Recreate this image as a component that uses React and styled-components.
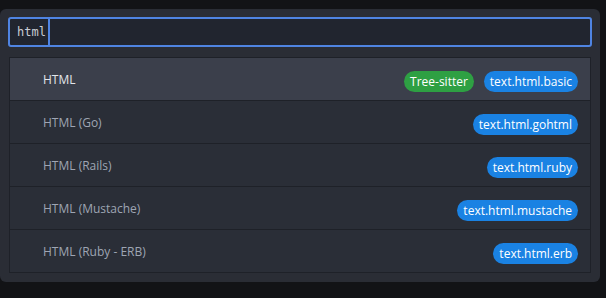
import React from 'react';
import styled, { createGlobalStyle } from 'styled-components';

const GlobalStyle = createGlobalStyle`
  html, body {
    margin: 0;
    padding: 0;
    background: #121316;
  }
`;

const grammars = [
  { name: 'HTML', badges: [{ label: 'Tree-sitter', kind: 'green' }, { label: 'text.html.basic' }] },
  { name: 'HTML (Go)', badges: [{ label: 'text.html.gohtml' }] },
  { name: 'HTML (Rails)', badges: [{ label: 'text.html.ruby' }] },
  { name: 'HTML (Mustache)', badges: [{ label: 'text.html.mustache' }] },
  { name: 'HTML (Ruby - ERB)', badges: [{ label: 'text.html.erb' }] },
];

const App = () => {
  return (
    <>
      <GlobalStyle />
      <Panel>
        <SearchBox>
          <Query>html</Query>
          <Cursor />
        </SearchBox>
        <List>
          {grammars.map((g, i) => (
            <Item key={g.name} selected={i === 0}>
              <Name selected={i === 0}>{g.name}</Name>
              <Badges>
                {g.badges.map((b) => (
                  <Badge key={b.label} kind={b.kind}>{b.label}</Badge>
                ))}
              </Badges>
            </Item>
          ))}
        </List>
      </Panel>
    </>
  );
};

export default App;

const Panel = styled.div`
  margin-top: 9px;
  width: 600px;
  height: 273px;
  box-sizing: border-box;
  padding: 8px 8px 0 8px;
  background: #2a2d35;
  border-radius: 6px;
  font-family: 'Open Sans', 'Noto Sans', sans-serif;
`;

const SearchBox = styled.div`
  display: flex;
  align-items: stretch;
  height: 30px;
  box-sizing: border-box;
  border: 2px solid #4f84e2;
  border-radius: 3px;
  background: #21252f;
  padding-left: 7px;
`;

const Query = styled.span`
  font-family: 'DejaVu Sans Mono', monospace;
  font-size: 12px;
  line-height: 26px;
  color: #c9cdd4;
`;

const Cursor = styled.span`
  width: 2px;
  margin-left: 2px;
  background: #4f84e2;
`;

const List = styled.div`
  margin: 10px 1px 0;
  border: 1px solid #1e2128;
  display: flex;
  flex-direction: column;
`;

const Item = styled.div`
  display: flex;
  align-items: center;
  justify-content: space-between;
  height: 42px;
  padding: 0 12px 0 33px;
  background: ${(p) => (p.selected ? '#3b3f4b' : '#2a2e37')};
  & + & {
    border-top: 1px solid #1e2128;
  }
`;

const Name = styled.span`
  font-size: 12px;
  color: ${(p) => (p.selected ? '#e2e5ea' : '#9ea5b3')};
`;

const Badges = styled.div`
  display: flex;
  gap: 10px;
  margin-top: 4px;
`;

const Badge = styled.span`
  height: 21px;
  line-height: 21px;
  padding: 0 6px;
  border-radius: 11px;
  font-size: 12px;
  color: #ffffff;
  background: ${(p) => (p.kind === 'green' ? '#2ea043' : '#1a82e3')};
`;
